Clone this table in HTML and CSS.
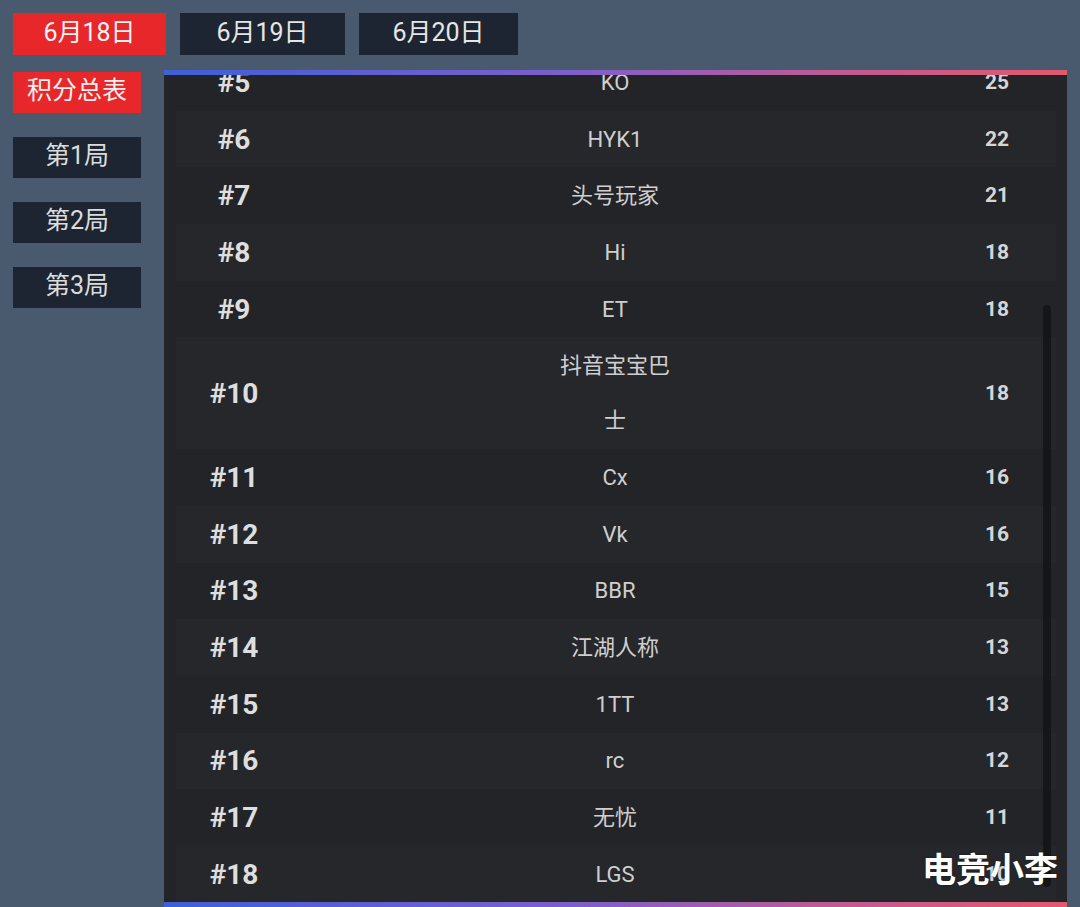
FILE: index.html
```html
<!DOCTYPE html>
<html lang="zh">

<head>
  <meta charset="UTF-8">
  <meta name="viewport" content="width=device-width, initial-scale=1.0">
  <title>积分总表</title>
  <link rel="stylesheet" href="styles.css">
</head>

<body>
  <nav class="date-tabs">
    <button class="date-tab date-tab-a is-active">6月18日</button>
    <button class="date-tab date-tab-b">6月19日</button>
    <button class="date-tab date-tab-c">6月20日</button>
  </nav>

  <main class="board">
    <aside class="round-tabs">
      <button class="round-tab is-active">积分总表</button>
      <button class="round-tab">第1局</button>
      <button class="round-tab">第2局</button>
      <button class="round-tab">第3局</button>
    </aside>

    <section class="panel">
      <div class="panel-body">
        <ul class="rows">
          <li class="row"><span class="rank">#5</span><span class="name">KO</span><span class="score">25</span></li>
          <li class="row"><span class="rank">#6</span><span class="name">HYK1</span><span class="score">22</span></li>
          <li class="row"><span class="rank">#7</span><span class="name">头号玩家</span><span class="score">21</span></li>
          <li class="row"><span class="rank">#8</span><span class="name">Hi</span><span class="score">18</span></li>
          <li class="row"><span class="rank">#9</span><span class="name">ET</span><span class="score">18</span></li>
          <li class="row"><span class="rank">#10</span><span class="name">抖音宝宝巴士</span><span class="score">18</span></li>
          <li class="row"><span class="rank">#11</span><span class="name">Cx</span><span class="score">16</span></li>
          <li class="row"><span class="rank">#12</span><span class="name">Vk</span><span class="score">16</span></li>
          <li class="row"><span class="rank">#13</span><span class="name">BBR</span><span class="score">15</span></li>
          <li class="row"><span class="rank">#14</span><span class="name">江湖人称</span><span class="score">13</span></li>
          <li class="row"><span class="rank">#15</span><span class="name">1TT</span><span class="score">13</span></li>
          <li class="row"><span class="rank">#16</span><span class="name">rc</span><span class="score">12</span></li>
          <li class="row"><span class="rank">#17</span><span class="name">无忧</span><span class="score">11</span></li>
          <li class="row"><span class="rank">#18</span><span class="name">LGS</span><span class="score">10</span></li>
        </ul>
        <!-- 滚动条 -->
        <div class="scroll-thumb"></div>
      </div>
    </section>
  </main>

  <div class="watermark">电竞小李</div>
</body>

</html>
```

FILE: styles.css
```css
* {
  box-sizing: border-box;
}

body {
  position: relative;
  margin: 0;
  padding: 13px;
  height: 907px;
  overflow: hidden;
  background-color: #4a5a6e;
  font-family: "Roboto", "Noto Sans CJK SC", sans-serif;
  color: #dcdcdc;
}

button {
  font-family: inherit;
  border: 0;
  cursor: pointer;
  line-height: 1;
}

.date-tabs {
  display: flex;
  gap: 14px;
}

.date-tab {
  height: 42px;
  padding: 0 0 4px;
  font-size: 25px;
  color: #e6e6e6;
  background-color: #1d2532;
}

.date-tab-a {
  width: 153px;
}

.date-tab-b {
  width: 165px;
}

.date-tab-c {
  width: 159px;
}

.is-active {
  background-color: #e8272b;
  color: #f4f4f4;
}

.board {
  display: flex;
  gap: 23px;
  margin-top: 15px;
}

.round-tabs {
  display: flex;
  flex-direction: column;
  gap: 24px;
  width: 128px;
  margin-top: 2px;
}

.round-tab {
  height: 41px;
  padding: 0 0 4px;
  font-size: 25px;
  color: #dcdcdc;
  background-color: #1d2532;
}

.round-tab.is-active {
  background-color: #e8272b;
  color: #f0f0f0;
}

.panel {
  width: 903px;
  height: 837px;
  padding: 5px 0;
  background:
    linear-gradient(90deg, #3f5fd8 0%, #7d5fcb 45%, #c05b92 75%, #e3586d 100%) top / 100% 5px no-repeat,
    linear-gradient(90deg, #3f5fd8 0%, #7d5fcb 45%, #c05b92 75%, #e3586d 100%) bottom / 100% 5px no-repeat,
    #232428;
}

.panel-body {
  position: relative;
  height: 100%;
  overflow: hidden;
  padding: 0 11px 0 12px;
}

.rows {
  list-style: none;
  margin: -21px 0 0;
  padding: 0;
}

.row {
  display: grid;
  grid-template-columns: 116px 1fr 118px;
  align-items: center;
  padding: 0.85px 0;
}

.row:nth-child(even) {
  background-color: #26272b;
}

.row:nth-child(odd) {
  background-color: #232428;
}

.rank {
  text-align: center;
  font-size: 28px;
  font-weight: 700;
  line-height: 55px;
  color: #dedede;
}

.name {
  justify-self: center;
  max-width: 116px;
  text-align: center;
  font-size: 22px;
  line-height: 55px;
  color: #cfcfcf;
}

.score {
  text-align: center;
  font-size: 21px;
  font-weight: 700;
  line-height: 55px;
  color: #d6d6d6;
}

.scroll-thumb {
  position: absolute;
  top: 230px;
  right: 16px;
  width: 8px;
  height: 582px;
  border-radius: 4px;
  background-color: #151619;
}

.watermark {
  position: absolute;
  left: 922px;
  top: 843px;
  font-family: "Noto Sans CJK SC", sans-serif;
  font-size: 34px;
  font-weight: 700;
  color: #ffffff;
  text-shadow: 0 0 2px rgba(0, 0, 0, 0.5);
}
```
